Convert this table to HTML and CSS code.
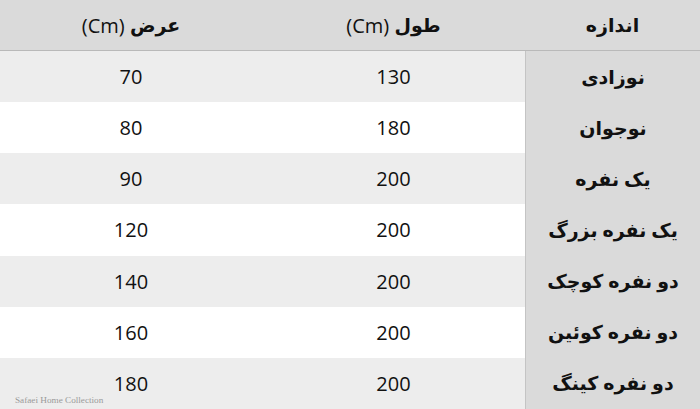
FILE: index.html
```html
<!DOCTYPE html>
<html lang="fa" dir="rtl">
<head>
<meta charset="utf-8">
<link rel="stylesheet" href="styles.css">
</head>
<body>
<div class="table">
  <div class="cell head size"><b class="ar">اندازه</b></div>
  <div class="cell head"><b class="ar">طول</b>&nbsp;(Cm)</div>
  <div class="cell head"><b class="ar">عرض</b>&nbsp;(Cm)</div>

  <div class="cell name odd">نوزادی</div>
  <div class="cell num odd">130</div>
  <div class="cell num odd">70</div>

  <div class="cell name">نوجوان</div>
  <div class="cell num">180</div>
  <div class="cell num">80</div>

  <div class="cell name odd">یک نفره</div>
  <div class="cell num odd">200</div>
  <div class="cell num odd">90</div>

  <div class="cell name">یک نفره بزرگ</div>
  <div class="cell num">200</div>
  <div class="cell num">120</div>

  <div class="cell name odd">دو نفره کوچک</div>
  <div class="cell num odd">200</div>
  <div class="cell num odd">140</div>

  <div class="cell name">دو نفره کوئین</div>
  <div class="cell num">200</div>
  <div class="cell num">160</div>

  <div class="cell name odd">دو نفره کینگ</div>
  <div class="cell num odd">200</div>
  <div class="cell num odd last">180<span class="mark" dir="ltr">Safaei Home Collection</span></div>
</div>
</body>
</html>
```

FILE: styles.css
```css
html, body {
  margin: 0;
  padding: 0;
  background: #ffffff;
}
body {
  width: 700px;
  height: 409px;
  overflow: hidden;
  font-family: "Open Sans", "DejaVu Sans", sans-serif;
  color: #111;
}
.table {
  display: grid;
  grid-template-columns: 175px 263px 262px;
  grid-template-rows: 51px repeat(7, 51.14px);
  height: 409px;
}
.cell {
  display: flex;
  align-items: center;
  justify-content: center;
  font-size: 20px;
  background: #ffffff;
  position: relative;
}
.odd {
  background: #ededed;
}
.head {
  background: #dadada;
  border-bottom: 1px solid #b9b9b9;
  font-size: 20px;
  font-weight: normal;
}
.ar {
  font-weight: bold;
  font-size: 19px;
}
.name {
  background: #dadada;
  border-left: 1px solid #c4c4c4;
  font-weight: bold;
  font-size: 19px;
}
.mark {
  position: absolute;
  left: 15px;
  bottom: 4px;
  font-family: "Liberation Serif", serif;
  font-size: 9.2px;
  color: #9a9a9a;
}
```
